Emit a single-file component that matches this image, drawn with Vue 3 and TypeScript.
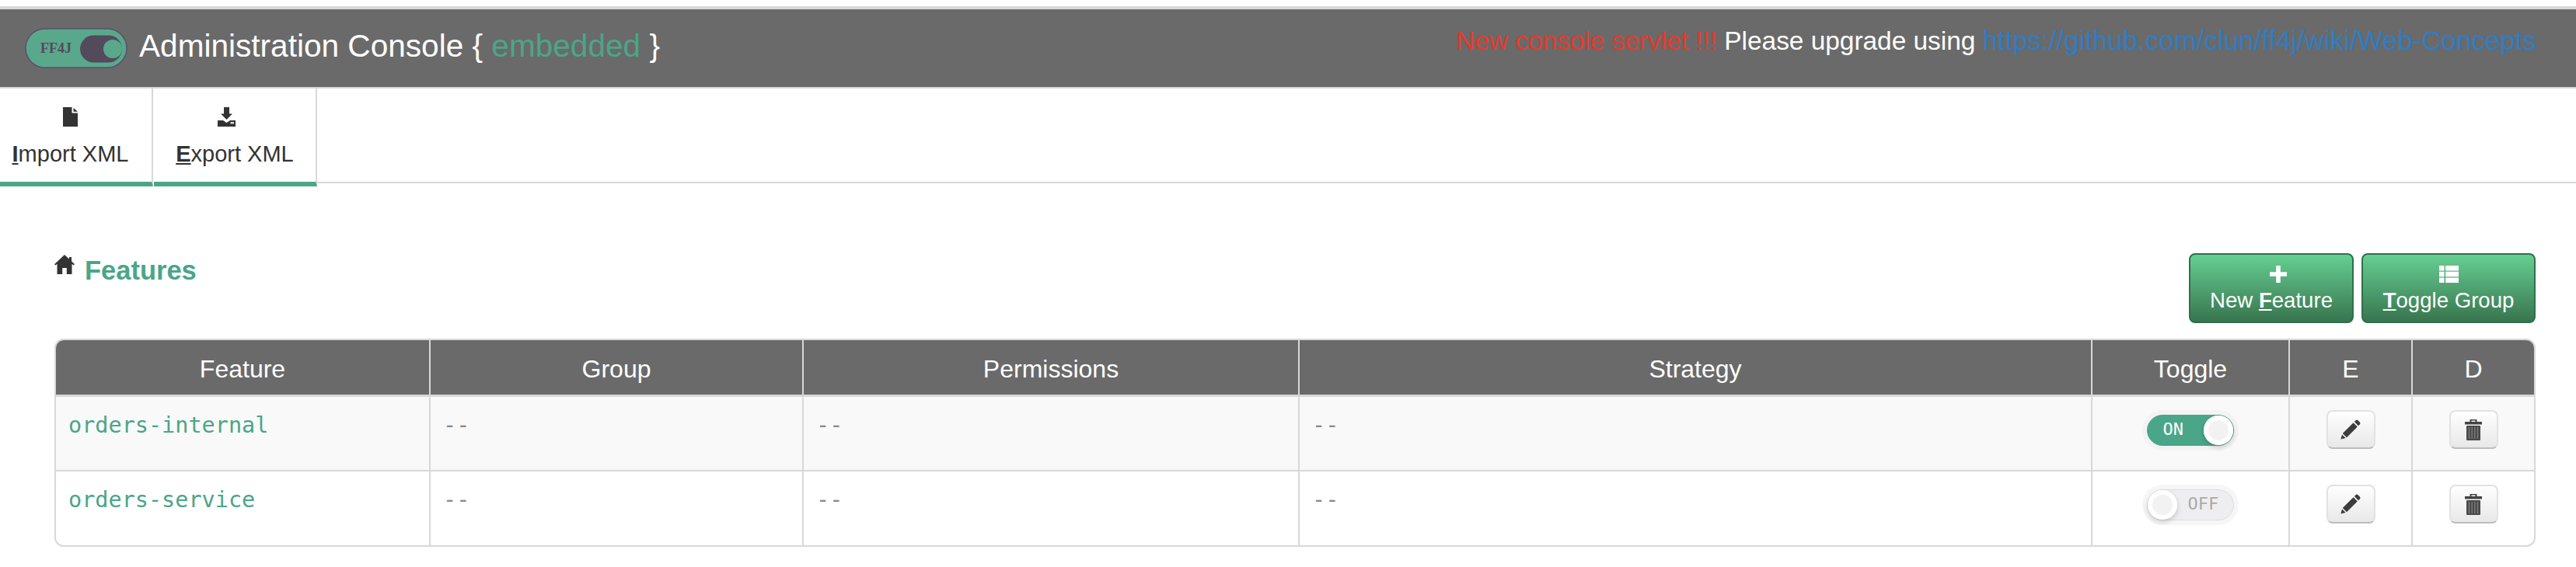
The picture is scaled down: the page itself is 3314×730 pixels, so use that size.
<template>
  <div class="page">
    <header class="navbar">
      <div class="brand">
        <svg class="logo" viewBox="0 0 132 52" width="132" height="52">
          <rect x="1" y="1" width="130" height="50" rx="25" fill="#5aa88c" stroke="#5a5068" stroke-width="1.5" />
          <rect x="71" y="9.5" width="54" height="35" rx="17.5" fill="#534a5c" />
          <circle cx="113" cy="27" r="12" fill="#5aa88c" />
          <text x="20" y="32" class="logo-text">FF4J</text>
        </svg>
        <h1 class="title">Administration Console { <span class="green">embedded</span> }</h1>
      </div>
      <div class="notice">
        <span class="red">New console servlet !!!</span> Please upgrade using
        <a class="link" href="#">https://github.com/clun/ff4j/wiki/Web-Concepts</a>
      </div>
    </header>

    <nav class="tabs">
      <a class="tab first" href="#">
        <svg class="tab-icon" viewBox="0 0 19 25" width="19" height="25">
          <path d="M0 0H11.5V7.5H19V25H0Z" fill="#333" />
          <path d="M13.5 1L19 5.8H13.5Z" fill="#333" />
        </svg>
        <span><u>I</u>mport XML</span>
      </a>
      <a class="tab second" href="#">
        <svg class="tab-icon" viewBox="0 0 23 25" width="23" height="25">
          <path d="M8 0H15V8.5H19L11.5 16L4 8.5H8Z" fill="#333" />
          <path d="M0 17H7L11.5 20L16 17H23V25H0Z" fill="#333" />
          <rect x="16.5" y="19" width="4.5" height="2.4" fill="#ddd" />
        </svg>
        <span><u>E</u>xport XML</span>
      </a>
      <div class="tab-fill"></div>
    </nav>

    <main class="content">
      <div class="toolbar">
        <h2 class="heading">
          <svg class="home" viewBox="0 0 26 25" width="26" height="25">
            <path d="M13 0L19 5.5V3H22V8.3L26 12.2L24.6 13.6L22.5 11.7V25H15.8V17H10.2V25H3.5V11.7L1.4 13.6L0 12.2Z" fill="#333" />
          </svg>
          <span>Features</span>
        </h2>
        <div class="actions">
          <button class="btn-green">
            <svg class="plus" viewBox="0 0 22 22" width="22" height="22">
              <path d="M8.2 0H13.8V8.2H22V13.8H13.8V22H8.2V13.8H0V8.2H8.2Z" fill="#fff" />
            </svg>
            <span>New <u>F</u>eature</span>
          </button>
          <button class="btn-green">
            <svg viewBox="0 0 25 22" width="25" height="22">
              <path d="M0 0H6.5V6.4H0ZM8.2 0H25V6.4H8.2ZM0 7.8H6.5V14.2H0ZM8.2 7.8H25V14.2H8.2ZM0 15.6H6.5V22H0ZM8.2 15.6H25V22H8.2Z" fill="#fff" />
            </svg>
            <span><u>T</u>oggle Group</span>
          </button>
        </div>
      </div>

      <div class="table-wrap">
        <table class="features">
          <colgroup>
            <col style="width: 480px" />
            <col style="width: 480px" />
            <col style="width: 638px" />
            <col style="width: 1020px" />
            <col style="width: 254px" />
            <col style="width: 158px" />
            <col />
          </colgroup>
          <thead>
            <tr>
              <th v-for="col in columns" :key="col">{{ col }}</th>
            </tr>
          </thead>
          <tbody>
            <tr v-for="row in rows" :key="row.id" :class="{ striped: row.enabled }">
              <td class="uid">{{ row.id }}</td>
              <td class="dash">--</td>
              <td class="dash">--</td>
              <td class="dash">--</td>
              <td class="center">
                <span class="switch" :class="row.enabled ? 'on' : 'off'">
                  <span class="switch-label">{{ row.enabled ? 'ON' : 'OFF' }}</span>
                  <span class="knob"></span>
                </span>
              </td>
              <td class="center">
                <button class="btn-small">
                  <svg viewBox="0 0 26 26" width="26" height="26">
                    <path d="M19.6 1.2a2.2 2.2 0 0 1 3 0l2.2 2.2a2.2 2.2 0 0 1 0 3l-1.8 1.8-5.2-5.2ZM16.6 4.2L21.8 9.4L8 23.2L2.8 18Z" fill="#3c3c3c" />
                    <path d="M2 19.4L6.6 24L0.4 25.6Z" fill="#3c3c3c" />
                  </svg>
                </button>
              </td>
              <td class="center">
                <button class="btn-small">
                  <svg viewBox="0 0 22 27" width="22" height="27">
                    <path d="M6.5 0H15.5V3H22V6.5H0V3H6.5ZM8.5 1.6V3H13.5V1.6Z" fill="#444" fill-rule="evenodd" />
                    <rect x="2" y="8" width="18" height="19" rx="1" fill="#4a4a4a" />
                    <path d="M5.5 10V25M9.2 10V25M12.8 10V25M16.5 10V25" stroke="#7c7c7c" stroke-width="1.4" />
                  </svg>
                </button>
              </td>
            </tr>
          </tbody>
        </table>
      </div>
    </main>
  </div>
</template>

<script setup lang="ts">
interface FeatureRow {
  id: string;
  enabled: boolean;
}

const columns: string[] = ['Feature', 'Group', 'Permissions', 'Strategy', 'Toggle', 'E', 'D'];

const rows: FeatureRow[] = [
  { id: 'orders-internal', enabled: true },
  { id: 'orders-service', enabled: false }
];
</script>

<style>
html,
body {
  margin: 0;
  background: #fff;
}
</style>

<style scoped>
.page {
  width: 3314px;
  height: 730px;
  overflow: hidden;
  font-family: "Liberation Sans", Arial, sans-serif;
  color: #333;
  box-sizing: border-box;
  padding-top: 8px;
}

.navbar {
  height: 100px;
  background: #6a6a6a;
  border-top: 4px solid #d8d8d8;
  border-bottom: 2px solid #d8d8d8;
  display: flex;
  justify-content: space-between;
  padding: 0 51px 0 32px;
}

.brand {
  display: flex;
  align-items: center;
  gap: 15px;
  height: 100px;
  padding-top: 10px;
  box-sizing: border-box;
}

.logo {
  margin-top: -10px;
}

.logo-text {
  font-family: "Liberation Serif", serif;
  font-weight: bold;
  font-size: 18px;
  fill: #534a5c;
}

.title {
  margin: -15px 0 0;
  font-size: 40.6px;
  font-weight: normal;
  color: #fff;
  white-space: nowrap;
}

.green {
  color: #4aa688;
}

.notice {
  font-size: 33.4px;
  line-height: 40px;
  padding-top: 20px;
  color: #fff;
  white-space: nowrap;
}

.red {
  color: #e5392c;
}

.link {
  color: #2f7cc4;
  font-size: 34.9px;
  text-decoration: none;
}

.tabs {
  display: flex;
  height: 126px;
}

.tab {
  height: 126px;
  box-sizing: border-box;
  border-right: 2px solid #d8d8d8;
  border-bottom: 6px solid #4aa688;
  display: flex;
  flex-direction: column;
  align-items: center;
  color: #333;
  font-size: 29px;
  text-decoration: none;
  padding-top: 24px;
  gap: 19px;
}

.tab.first {
  width: 197px;
  margin-right: 1px;
  padding-right: 14px;
}

.tab.second {
  width: 210px;
}

.second .tab-icon {
  margin-right: 22px;
}

.tab u {
  font-weight: bold;
}

.tab-fill {
  flex: 1;
  height: 122px;
  box-sizing: border-box;
  border-bottom: 2px solid #d8d8d8;
}

.content {
  padding: 86px 52px 0 70px;
}

.toolbar {
  display: flex;
  justify-content: space-between;
  align-items: flex-start;
  height: 110px;
}

.heading {
  margin: 0;
  display: flex;
  align-items: flex-start;
  gap: 13px;
  font-size: 34.5px;
  line-height: 40px;
  color: #4aa688;
}

.home {
  margin-top: 2px;
}

.heading span {
  margin-top: 2px;
}

.actions {
  display: flex;
  gap: 10px;
}

.btn-green {
  height: 90px;
  padding: 14px 0 0;
  box-sizing: border-box;
  width: 212px;
  border: 2px solid #2f6f4a;
  border-radius: 8px;
  background: linear-gradient(#66cf92, #38754f);
  color: #fff;
  font-family: inherit;
  font-size: 27.6px;
  display: flex;
  flex-direction: column;
  align-items: center;
  gap: 7px;
}

.btn-green + .btn-green {
  width: 224px;
}

.btn-green u {
  font-weight: bold;
}

.plus {
  margin-left: 18px;
}

.table-wrap {
  width: 3192px;
  box-sizing: border-box;
  border: 2px solid #d8d8d8;
  border-radius: 12px;
  overflow: hidden;
}

.features {
  width: 100%;
  table-layout: fixed;
  border-collapse: separate;
  border-spacing: 0;
}

.features th {
  height: 66px;
  padding: 4px 0 0;
  background: #6a6a6a;
  color: #fff;
  font-size: 32px;
  font-weight: normal;
  text-align: center;
  border-left: 2px solid #d8d8d8;
  border-bottom: 3px solid #d8d8d8;
}

.features td {
  height: 96px;
  box-sizing: border-box;
  padding: 17px 16px 0;
  vertical-align: top;
  border-left: 2px solid #d8d8d8;
  border-bottom: 2px solid #d8d8d8;
}

.features th:first-child,
.features td:first-child {
  border-left: none;
}

.features tr:last-child td {
  height: 95px;
  border-bottom: none;
}

.striped td {
  background: #f9f9f9;
}

.uid,
.dash {
  font-family: "DejaVu Sans Mono", "Liberation Mono", monospace;
  font-size: 28.5px;
  line-height: 40px;
}

.uid {
  color: #4aa688;
}

.dash {
  color: #888;
}

.features td.center {
  text-align: center;
  padding: 17px 0 0;
}

.switch {
  position: relative;
  display: inline-block;
  width: 112px;
  height: 40px;
  margin: 6px 1px 0 0;
  border-radius: 20px;
  box-sizing: border-box;
  font-family: "DejaVu Sans Mono", monospace;
  font-size: 22px;
  line-height: 36px;
  text-align: left;
  box-shadow: 0 0 0 6px #f3f3f3;
}

.switch.on {
  background: #4aa688;
  color: #fff;
  border: 1px solid #4aa688;
}

.switch.off {
  background: #eeeef0;
  color: #aaa;
  border: 1px solid #ddd;
  box-shadow: 0 0 0 6px #f6f6f6;
}

.switch-label {
  position: absolute;
  top: 0;
}

.on .switch-label {
  left: 20px;
}

.off .switch-label {
  left: 52px;
}

.knob {
  position: absolute;
  top: 0;
  width: 38px;
  height: 38px;
  border-radius: 50%;
  background: #f2f2f2;
  box-shadow: inset 0 0 0 6px #fff, 0 3px 6px rgba(0, 0, 0, 0.18);
}

.on .knob {
  right: 0;
}

.off .knob {
  left: 0;
}

.btn-small {
  width: 63px;
  height: 50px;
  padding: 0;
  display: inline-flex;
  align-items: center;
  justify-content: center;
  border: 2px solid #e2e2e2;
  border-bottom-color: #bdbdbd;
  border-radius: 8px;
  background: linear-gradient(#fff, #e8e8e8);
}
</style>
